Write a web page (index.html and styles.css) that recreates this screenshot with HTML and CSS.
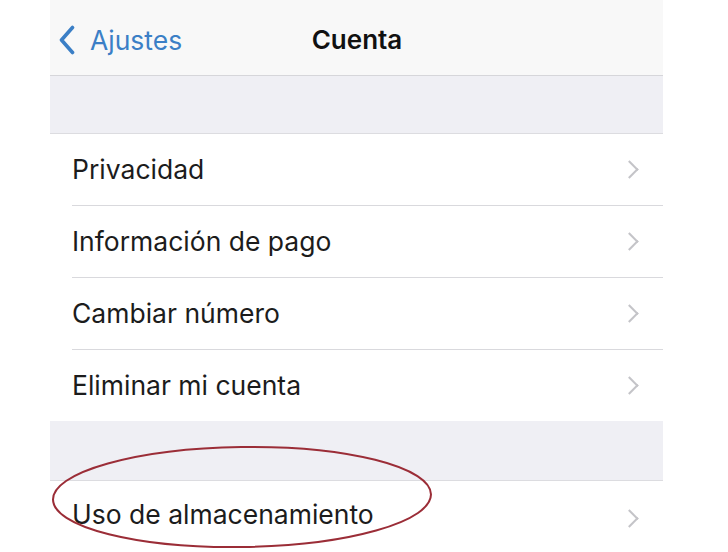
FILE: index.html
```html
<!DOCTYPE html>
<html lang="es">
  <head>
    <meta charset="UTF-8" />
    <meta name="viewport" content="width=device-width, initial-scale=1.0" />
    <title>Cuenta</title>
    <link rel="stylesheet" href="styles.css">
  </head>
  <body>
    <div class="screen">
      <div class="nav">
        <a class="back" href="#">
          <svg class="back-icon" width="18" height="30" viewBox="0 0 18 30">
            <path d="M14.5 2.5 L3.5 15 L14.5 27.5" fill="none" stroke="#3b7fc6" stroke-width="3.6" stroke-linecap="round" stroke-linejoin="round" />
          </svg>
          <span>Ajustes</span>
        </a>
        <div class="title">Cuenta</div>
      </div>

      <div class="gap"></div>

      <ul class="list">
        <li class="row"><div class="row-inner"><span>Privacidad</span><i class="chevron"></i></div></li>
        <li class="row"><div class="row-inner"><span>Información de pago</span><i class="chevron"></i></div></li>
        <li class="row"><div class="row-inner"><span>Cambiar número</span><i class="chevron"></i></div></li>
        <li class="row"><div class="row-inner last"><span>Eliminar mi cuenta</span><i class="chevron"></i></div></li>
      </ul>

      <div class="gap gap-2"></div>

      <ul class="list">
        <li class="row"><div class="row-inner last tall"><span>Uso de almacenamiento</span><i class="chevron"></i></div></li>
      </ul>

      <svg class="mark" width="400" height="110" viewBox="0 0 400 110">
        <ellipse cx="190" cy="54" rx="189" ry="50" fill="none" stroke="#9b2d37" stroke-width="2" transform="rotate(-0.8 190 54)" />
      </svg>
    </div>
  </body>
</html>
```

FILE: styles.css
```css
body {
  margin: 0;
  background: #ffffff;
  font-family: Inter, "Liberation Sans", Arial, sans-serif;
}
.screen {
  position: relative;
  width: 613px;
  height: 552px;
  margin-left: 50px;
  background: #efeff4;
  overflow: hidden;
}
.nav {
  position: relative;
  height: 75px;
  background: #f8f8f8;
  border-bottom: 1px solid #d6d6da;
  display: flex;
  align-items: center;
  justify-content: center;
}
.back {
  position: absolute;
  left: 8px;
  top: 24px;
  display: flex;
  align-items: center;
  gap: 14px;
  color: #3b7fc6;
  text-decoration: none;
  font-size: 26.5px;
}
.title {
  font-size: 26px;
  font-weight: 600;
  color: #111;
  margin-top: 4px;
  margin-left: 1px;
}
.gap {
  height: 57px;
  border-bottom: 1px solid #dcdce0;
}
.gap-2 {
  height: 59px;
}
.list {
  list-style: none;
  margin: 0;
  padding: 0;
  background: #ffffff;
}
.row {
  padding-left: 22px;
}
.row-inner {
  height: 71px;
  border-bottom: 1px solid #d9d9dd;
  display: flex;
  align-items: center;
  justify-content: space-between;
  padding-right: 27px;
  font-size: 26.5px;
  color: #1c1c1c;
}
.row-inner.last {
  border-bottom: none;
}
.row-inner.tall {
  height: 80px;
  align-items: flex-start;
  padding-top: 19px;
  box-sizing: border-box;
}
.row-inner.tall .chevron {
  margin-top: 12px;
}
.row-inner span {
  margin-top: -2px;
}
.chevron {
  width: 11px;
  height: 11px;
  border-top: 2px solid #c4c4c8;
  border-right: 2px solid #c4c4c8;
  transform: rotate(45deg);
}
.mark {
  position: absolute;
  left: 2px;
  top: 443px;
}
```
